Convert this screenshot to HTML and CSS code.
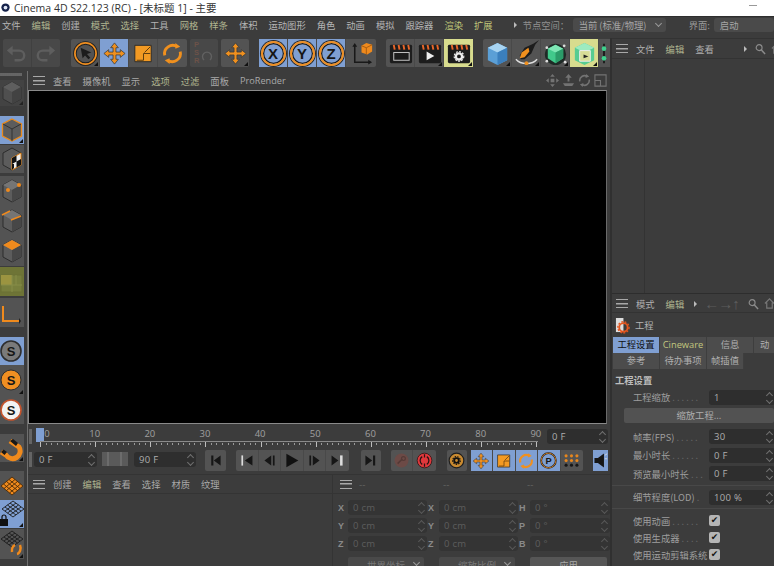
FILE: index.html
```html
<!DOCTYPE html>
<html lang="zh">
<head>
<meta charset="utf-8">
<title>Cinema 4D</title>
<link rel="stylesheet" href="styles.css">
</head>
<body>
<svg class="defs" width="0" height="0" aria-hidden="true">
  <symbol id="arrow" viewBox="0 0 28 28"><circle cx="14" cy="14" r="11" fill="none" stroke="#1f1f1f" stroke-width="3.6"/><circle cx="14" cy="14" r="11" fill="none" stroke="#ef8f22" stroke-width="1.8"/><path d="M9 8l11 5-4.500 1.500 3.500 4-2 1.500-3.500-4L11 19z" fill="#1c1c1c"/></symbol>
  <symbol id="move" viewBox="0 0 28 28"><path d="M14 3l4 5h-2.500v4.500H20V10l5 4-5 4v-2.500h-4.500V20H18l-4 5-4-5h2.500v-4.500H8V18l-5-4 5-4v2.500h4.500V8H10z" fill="#f0901e" stroke="#3a3a3a" stroke-width=".8"/></symbol>
  <symbol id="scale" viewBox="0 0 28 28"><path d="M5 5.500h17v17H5z" fill="#f39a23" stroke="#2b2b2b"/><path d="M7 21h7v-7h7" fill="none" stroke="#5a3a10" stroke-width="1"/><path d="M15 13l6-6" stroke="#5a3a10"/></symbol>
  <symbol id="rotate" viewBox="0 0 28 28"><path d="M6 16a8.500 8.500 0 0 1 13-9" fill="none" stroke="#f0901e" stroke-width="3"/><path d="M22 12a8.500 8.500 0 0 1-13 9" fill="none" stroke="#f0901e" stroke-width="3"/><path d="M17 3l5 4-5 2zM11 25l-5-4 5-2z" fill="#f0901e"/></symbol>
  <symbol id="undo" viewBox="0 0 28 28"><path d="M8 11h9a5 5 0 0 1 0 10h-5" fill="none" stroke="#5e5e5e" stroke-width="2.500"/><path d="M10 6v10l-6-5z" fill="#5e5e5e"/></symbol>
  <symbol id="redo" viewBox="0 0 28 28"><path d="M20 11h-9a5 5 0 0 0 0 10h5" fill="none" stroke="#5e5e5e" stroke-width="2.500"/><path d="M18 6v10l6-5z" fill="#5e5e5e"/></symbol>
  <symbol id="coord" viewBox="0 0 28 28"><path d="M7 6v17h15" fill="none" stroke="#191919" stroke-width="1.600"/><path d="M7 3l2.500 4h-5zM25 23l-4 2.500v-5z" fill="#191919"/><path d="M14 6l5-3 6 2v7l-5 3-6-2z" fill="#ef8a1d"/><path d="M19 8l6-3M19 8v7M19 8l-5-2" stroke="#a85c10" fill="none"/></symbol>
  <symbol id="film" viewBox="0 0 28 28"><rect x="3" y="5" width="23" height="19" rx="1.500" fill="#1d1d1d"/><path d="M7 5l1 5M12 5l1 5M17 5l1 5M22 5l1 5" stroke="#e8662a" stroke-width="2"/><rect x="7" y="13" width="16" height="8" fill="none" stroke="#c9c9c9" stroke-width="1"/></symbol>
  <symbol id="filmplay" viewBox="0 0 28 28"><rect x="3" y="5" width="23" height="19" rx="1.500" fill="#1d1d1d"/><path d="M7 5l1 5M12 5l1 5M17 5l1 5M22 5l1 5" stroke="#e8662a" stroke-width="2"/><path d="M11 12l8 4.500-8 4.500z" fill="#eee"/></symbol>
  <symbol id="filmgear" viewBox="0 0 28 28"><rect x="3" y="5" width="23" height="19" rx="1.500" fill="#1d1d1d"/><path d="M7 5l1 5M12 5l1 5M17 5l1 5M22 5l1 5" stroke="#e8662a" stroke-width="2"/><circle cx="14.500" cy="17" r="3.200" fill="none" stroke="#eee" stroke-width="2.400"/><circle cx="14.500" cy="17" r="5" fill="none" stroke="#eee" stroke-width="1.200" stroke-dasharray="2 1.300"/></symbol>
  <symbol id="bluecube" viewBox="0 0 28 28"><path d="M14 3l10 5v13l-10 5-10-5V8z" fill="#5b9fd6"/><path d="M4 8l10-5 10 5-10 5z" fill="#a8d4f2"/><path d="M14 13v13l10-5V8z" fill="#3b7fbd"/></symbol>
  <symbol id="pen" viewBox="0 0 28 28"><path d="M27 0l-6 4-9 4-5 8 1 4 4 0 7-6 4-9z" fill="#1d1d1d"/><path d="M16 8l-7 5-2 6 5-1 5-6z" fill="#f0901e"/><path d="M3 20c5 6 17 6 22 0" fill="none" stroke="#ddd" stroke-width="1.400"/><circle cx="14" cy="24" r="2" fill="#f0901e"/></symbol>
  <symbol id="nurbs" viewBox="0 0 28 28"><circle cx="14" cy="15" r="11" fill="#1f2a26"/><path d="M14 5l8 4v10l-8 5-8-5V9z" fill="#41c98b"/><path d="M6 9l8-4 8 4-8 4z" fill="#7ee6b4"/><path d="M14 13v11l8-5V9z" fill="#2b9c69"/><circle cx="5" cy="8" r="1.400" fill="#ddd"/><circle cx="23" cy="6" r="1.400" fill="#ddd"/><circle cx="5" cy="22" r="1.400" fill="#ddd"/><circle cx="24" cy="23" r="1.400" fill="#ddd"/></symbol>
  <symbol id="boole" viewBox="0 0 28 28"><path d="M14 3l10 5v13l-10 5-10-5V8z" fill="#57cc92"/><path d="M4 8l10-5 10 5-10 5z" fill="#9debc0"/><path d="M9 11h11v11H9z" fill="#d8dc96" stroke="#eee"/><path d="M13 15l5 2-5 2z" fill="#222"/></symbol>
  <symbol id="gears" viewBox="0 0 10 28"><path d="M5 4v20" stroke="#1d1d1d" stroke-width="2"/><circle cx="5" cy="9" r="2.400" fill="#3ed08d"/><circle cx="5" cy="19" r="2.400" fill="#3ed08d"/></symbol>
  <symbol id="cube" viewBox="0 0 24 28"><path d="M12 3l9 5v12l-9 5-9-5V8z" fill="#5c5c5c" stroke="#2c2c2c"/><path d="M3 8l9-5 9 5-9 5z" fill="#757575"/><path d="M12 13v12l9-5V8z" fill="#474747"/></symbol>
  <symbol id="cubeo" viewBox="0 0 24 28"><path d="M12 3l9.500 5v12L12 25l-9.500-5V8z" fill="#5c5c5c" stroke="#e98a1c" stroke-width="1.300"/><path d="M3 8l9 5 9-5M12 13v12" fill="none" stroke="#333"/></symbol>
  <symbol id="checker" viewBox="0 0 24 28"><path d="M12 3l9 5v12l-9 5-9-5V8z" fill="#5c5c5c" stroke="#2c2c2c"/><path d="M12 13l9-5v12l-9 5z" fill="#eee" stroke="#e98a1c"/><path d="M12 13l4.500-2.500v6L12 19zM16.500 16.500l4.500-2.500v6l-4.500 2.500zM12 19l2 0v4l-2 2z" fill="#111"/></symbol>
  <symbol id="cubev" viewBox="0 0 24 28"><use href="#cube"/><circle cx="8" cy="13" r="2" fill="#ef8a1d"/><circle cx="19" cy="8" r="2" fill="#ef8a1d"/></symbol>
  <symbol id="cubee" viewBox="0 0 24 28"><use href="#cube"/><path d="M2 8l8-4M11 13l10-4" stroke="#ef8a1d" stroke-width="1.500"/></symbol>
  <symbol id="cubep" viewBox="0 0 24 28"><use href="#cube"/><path d="M12 3l9 5-9 5-9-5z" fill="#ef8a1d"/></symbol>
  <symbol id="lsys" viewBox="0 0 24 28"><path d="M3 7v15h16" fill="none" stroke="#ef8a1d" stroke-width="2"/><path d="M19 19l2 3-2 3z" fill="#222"/></symbol>
  <symbol id="workp" viewBox="0 0 24 28"><rect x="1" y="7" width="21" height="17" fill="#787f3d" stroke="#6a7035"/><rect x="1" y="7" width="11" height="10" fill="#9b9440"/><path d="M12 7v17M1 17h21M16 7v10" stroke="#868d49"/></symbol>
  <symbol id="magnet" viewBox="0 0 24 28"><path d="M10 7l9 6a6.500 6.500 0 0 1-13 8l-5-3" fill="none" stroke="#ef8a1d" stroke-width="5"/><path d="M1 18l2.500-2.500 3.500 2.500-2.500 3zM10 7l3-2 5 4-2 3z" fill="#181818"/></symbol>
  <symbol id="grido" viewBox="0 0 24 28"><path d="M12 5l11 9-11 9L1 14z" fill="#ef8a1d"/><path d="M12 5l11 9-11 9L1 14zM6.500 9.500l11 9M9 7.500l11 9M3.500 12l11 9M17.500 9.500l-11 9M15 7.500l-11 9M20.500 12l-11 9" fill="none" stroke="#4a2a08" stroke-width=".9"/></symbol>
  <symbol id="gridlock" viewBox="0 0 24 28"><path d="M13 1l11 8-11 8L2 9zM7.500 5l11 8M10 3l11 8M5 7l11 8M18.500 5l-11 8M16 3L5 11M21 7l-11 8" fill="none" stroke="#1c1c1c" stroke-width=".9"/><rect x="0" y="19" width="8" height="7" fill="#111"/><path d="M2 19v-2a2 2 0 0 1 4 0v2" fill="none" stroke="#111" stroke-width="1.200"/></symbol>
  <symbol id="gridrot" viewBox="0 0 24 28"><path d="M12 1l11 8-11 8L1 9zM6.500 5l11 8M9 3l11 8M4 7l11 8M17.500 5l-11 8M15 3L4 11M20 7l-11 8" fill="none" stroke="#1c1c1c" stroke-width=".9"/><path d="M12 22a4 6 0 0 1 3-7M20 15a4 6 0 0 1-3 9" fill="none" stroke="#ef8a1d" stroke-width="2.500"/></symbol>
  <symbol id="first" viewBox="0 0 20 20"><path d="M5 4h2.500v12H5zM16 4v12L8 10z" fill="#161616"/></symbol>
  <symbol id="prevk" viewBox="0 0 20 20"><path d="M4 4h2v12H4z" fill="#ddd"/><path d="M17 4v12L8 10z" fill="#161616"/></symbol>
  <symbol id="prev" viewBox="0 0 20 20"><path d="M12 4v12L4 10zM14 4h2v12h-2z" fill="#161616"/></symbol>
  <symbol id="play" viewBox="0 0 20 20"><path d="M4 2l14 8-14 8z" fill="#111"/></symbol>
  <symbol id="next" viewBox="0 0 20 20"><path d="M4 4h2v12H4zM8 4l8 6-8 6z" fill="#161616"/></symbol>
  <symbol id="nextk" viewBox="0 0 20 20"><path d="M3 4l8 6-8 6z" fill="#161616"/><path d="M13 4h3v12h-3z" fill="#ddd"/></symbol>
  <symbol id="last" viewBox="0 0 20 20"><path d="M4 4l8 6-8 6zM13 4h2.500v12H13z" fill="#161616"/></symbol>
  <symbol id="key" viewBox="0 0 22 22"><circle cx="11" cy="11" r="9" fill="#6c4a46"/><path d="M6 15l6-6" stroke="#543a36" stroke-width="2"/><circle cx="13.500" cy="8.500" r="2.500" fill="none" stroke="#543a36" stroke-width="1.500"/></symbol>
  <symbol id="rec" viewBox="0 0 22 22"><circle cx="11" cy="11" r="9.500" fill="#e0383c" stroke="#2a1414"/><path d="M8 6a6 6 0 0 0 0 10M14 6a6 6 0 0 1 0 10M11 3v4M11 15v4" fill="none" stroke="#2a1414" stroke-width="1.600"/></symbol>
  <symbol id="gear" viewBox="0 0 22 22"><circle cx="11" cy="11" r="9.500" fill="#c98a30" stroke="#1e1e1e" stroke-width="1.500"/><circle cx="11" cy="11" r="3" fill="none" stroke="#111" stroke-width="2.400"/><circle cx="11" cy="11" r="5" fill="none" stroke="#111" stroke-width="1.400" stroke-dasharray="2 1.400"/></symbol>
  <symbol id="dots" viewBox="0 0 22 18"><g fill="#e8871d"><circle cx="4" cy="3" r="2"/><circle cx="11" cy="3" r="2"/><circle cx="18" cy="3" r="2"/><circle cx="4" cy="9" r="2"/><circle cx="11" cy="9" r="2"/><circle cx="18" cy="9" r="2"/></g><g fill="#171717"><circle cx="4" cy="15" r="2"/><circle cx="11" cy="15" r="2"/><circle cx="18" cy="15" r="2"/></g></symbol>
  <symbol id="speaker" viewBox="0 0 16 22"><path d="M1 8h4l7-5v16l-7-5H1z" fill="#161616"/><path d="M13 5l3-2M13 9h3" stroke="#ddd"/></symbol>
  <symbol id="search" viewBox="0 0 12 12"><circle cx="4.500" cy="4.500" r="3.200" fill="none" stroke="#8b8b8b" stroke-width="1.300"/><path d="M7 7l4 4.500" stroke="#8b8b8b" stroke-width="1.600"/></symbol>
  <symbol id="doc" viewBox="0 0 16 18"><path d="M1 1h8v15H1z" fill="#ddd"/><circle cx="9" cy="11" r="4.500" fill="none" stroke="#e5561f" stroke-width="2"/><circle cx="9" cy="11" r="6" fill="none" stroke="#e5561f" stroke-width="1.400" stroke-dasharray="2 1.600"/></symbol>
  <symbol id="navmove" viewBox="0 0 14 14"><path d="M7 0l2.500 3h-5zM7 14l-2.500-3h5zM0 7l3-2.500v5zM14 7l-3 2.500v-5zM5 5h4v4H5z" fill="#737373"/></symbol>
  <symbol id="navzoom" viewBox="0 0 14 14"><path d="M7 0l3.500 4h-2.500v4H6V4H3.500zM1 10h12l-2 3H3z" fill="#737373"/></symbol>
  <symbol id="navrot" viewBox="0 0 14 14"><path d="M2 8a5 5 0 0 1 8-5M12 6a5 5 0 0 1-8 5" fill="none" stroke="#737373" stroke-width="1.700"/><path d="M9 0l3 3-4 1zM5 14l-3-3 4-1z" fill="#737373"/></symbol>
  <symbol id="navmax" viewBox="0 0 14 14"><path d="M1 1h12v12H1zM1 7h6v6" fill="none" stroke="#737373" stroke-width="1.200"/></symbol>
  <symbol id="house" viewBox="0 0 12 12"><path d="M1 6l5-5 5 5M3 5v6h6V5" fill="none" stroke="#777" stroke-width="1.300"/></symbol>
</svg>

<div class="app">
  <header class="title">
    <svg class="title-logo" viewBox="0 0 12 12"><circle cx="6" cy="6" r="5.500" fill="#15224a"/><circle cx="6" cy="6" r="2.500" fill="#dfe6f5"/></svg>
    <span class="title-text">Cinema 4D S22.123 (RC) - [未标题 1] - 主要</span>
    <span class="minimize"></span>
  </header>

  <nav class="menu">
    <span>文件</span><span class="g">编辑</span><span>创建</span><span class="g">模式</span><span class="g">选择</span><span>工具</span><span class="g">网格</span><span class="g">样条</span><span>体积</span><span>运动图形</span><span>角色</span><span>动画</span><span>模拟</span><span>跟踪器</span><span class="y">渲染</span><span class="y">扩展</span>
    <i class="tri menu-tri"></i><span class="node-label">节点空间：</span>
    <span class="select node-sel">当前 (标准/物理)<i class="chev"></i></span>
    <span class="ui-label">界面:</span>
    <span class="select ui-sel">启动</span>
  </nav>

  <div class="work">
    <div class="left">
      <div class="toolbar">
        <div class="grp dis"><span class="b"><svg><use href="#undo"/></svg></span><span class="b"><svg><use href="#redo"/></svg></span></div>
        <div class="grp m11"><span class="b c"><svg><use href="#arrow"/></svg></span><span class="b on"><svg><use href="#move"/></svg></span><span class="b"><svg><use href="#scale"/></svg></span><span class="b"><svg><use href="#rotate"/></svg></span></div>
        <div class="grp m3 psr"><span class="psr-t">P<br>S<br>R</span><svg viewBox="0 0 12 12"><path d="M3 9a4.500 4.500 0 1 1 6 0" fill="none" stroke="#616161" stroke-width="1.400"/></svg></div>
        <div class="grp m3"><span class="b c"><svg><use href="#move"/></svg></span></div>
        <div class="grp m10"><span class="b on axis"><b>X</b></span><span class="b on axis"><b>Y</b></span><span class="b on axis"><b>Z</b></span><span class="b wide30"><svg><use href="#coord"/></svg></span></div>
        <div class="grp m10"><span class="b"><svg><use href="#film"/></svg></span><span class="b c"><svg><use href="#filmplay"/></svg></span><span class="b yel c"><svg><use href="#filmgear"/></svg></span></div>
        <div class="grp m10 clip"><span class="b c"><svg><use href="#bluecube"/></svg></span><span class="b c"><svg><use href="#pen"/></svg></span><span class="b c"><svg><use href="#nurbs"/></svg></span><span class="b yel c"><svg><use href="#boole"/></svg></span><span class="b narrow"><svg viewBox="0 0 10 28"><use href="#gears"/></svg></span></div>
      </div>

      <div class="mid">
        <aside class="tools">
          <div class="grip"></div>
          <span class="t dim c"><svg><use href="#cube"/></svg></span>
          <span class="t on c h28 top10"><svg><use href="#cubeo"/></svg></span>
          <span class="t h28 top1"><svg><use href="#checker"/></svg></span>
          <span class="t h30 top3"><svg><use href="#cubev"/></svg></span>
          <span class="t h30"><svg><use href="#cubee"/></svg></span>
          <span class="t h30"><svg><use href="#cubep"/></svg></span>
          <span class="t olive"><svg><use href="#workp"/></svg></span>
          <span class="t top2 h29"><svg><use href="#lsys"/></svg></span>
          <span class="t on h28 top10"><svg viewBox="0 0 24 28"><circle cx="11" cy="14" r="10" fill="#7a7a7a" stroke="#2e2e2e" stroke-width="1.600"/><text x="11" y="18.500" text-anchor="middle" class="sicon">S</text></svg></span>
          <span class="t c h30"><svg viewBox="0 0 24 28"><circle cx="11" cy="14" r="10" fill="#ef8f22" stroke="#2e2e2e"/><text x="11" y="18.500" text-anchor="middle" class="sicon">S</text></svg></span>
          <span class="t h29"><svg viewBox="0 0 24 28"><circle cx="11" cy="14" r="10" fill="#f2f2f2" stroke="#c4532c" stroke-width="1.600"/><text x="11" y="18.500" text-anchor="middle" class="sicon">S</text></svg></span>
          <span class="t c h28 top10"><svg><use href="#magnet"/></svg></span>
          <span class="t h29 top9"><svg><use href="#grido"/></svg></span>
          <span class="t on c h28"><svg><use href="#gridlock"/></svg></span>
          <span class="t c h30 top1"><svg><use href="#gridrot"/></svg></span>
        </aside>

        <main class="center">
          <div class="viewhead">
            <span class="burger"></span>
            <span>查看</span><span>摄像机</span><span>显示</span><span class="g">选项</span><span class="g">过滤</span><span>面板</span><span class="latin">ProRender</span>
            <span class="nav">
              <svg><use href="#navmove"/></svg><svg><use href="#navzoom"/></svg><svg><use href="#navrot"/></svg><svg><use href="#navmax"/></svg>
            </span>
          </div>
          <div class="viewport"></div>

          <div class="timeline">
            <span class="vgrip"></span>
            <div class="ruler">
              <span class="playhead"></span>
              <div class="nums"><span>0</span><span>10</span><span>20</span><span>30</span><span>40</span><span>50</span><span>60</span><span>70</span><span>80</span><span>90</span></div>
              <div class="ticks"></div>
            </div>
            <span class="field frame">0 F<i class="spin"></i></span>
          </div>

          <div class="transport">
            <span class="vgrip"></span>
            <span class="field f1">0 F<i class="spin"></i></span>
            <span class="range"></span>
            <span class="field f2">90 F<i class="spin"></i></span>
            <div class="tg tm9"><span class="k"><svg><use href="#first"/></svg></span></div>
            <div class="tg tm10"><span class="k"><svg><use href="#prevk"/></svg></span><span class="k"><svg><use href="#prev"/></svg></span><span class="k"><svg><use href="#play"/></svg></span><span class="k"><svg><use href="#next"/></svg></span><span class="k"><svg><use href="#nextk"/></svg></span></div>
            <div class="tg tm12"><span class="k"><svg><use href="#last"/></svg></span></div>
            <div class="tg tm10"><span class="k"><svg><use href="#key"/></svg></span><span class="k"><svg><use href="#rec"/></svg></span></div>
            <div class="tg tm11"><span class="k"><svg><use href="#gear"/></svg></span></div>
            <div class="tg tm4"><span class="k on big"><svg><use href="#move"/></svg></span><span class="k on big"><svg><use href="#scale"/></svg></span><span class="k on big"><svg><use href="#rotate"/></svg></span><span class="k on"><svg viewBox="0 0 22 22"><circle cx="11" cy="11" r="9.500" fill="none" stroke="#1a1a1a" stroke-width="2.400"/><circle cx="11" cy="11" r="9.500" fill="none" stroke="#ef8f22"/><text x="11" y="15.500" text-anchor="middle" class="picon">P</text></svg></span><span class="k"><svg><use href="#dots"/></svg></span></div>
            <div class="tg tm10"><span class="k on spk"><svg viewBox="0 0 16 22"><use href="#speaker"/></svg></span></div>
          </div>

          <div class="bottom">
            <section class="mat">
              <div class="subhead"><span class="burger"></span><span>创建</span><span class="g">编辑</span><span>查看</span><span>选择</span><span>材质</span><span>纹理</span></div>
            </section>
            <section class="coord">
              <div class="subhead dash"><span class="burger"></span><span>--</span><span>--</span><span>--</span></div>
              <div class="cgrid">
                <b>X</b><span class="field off">0 cm<i class="spin"></i></span><b>X</b><span class="field off">0 cm<i class="spin"></i></span><b>H</b><span class="field off">0 °<i class="spin"></i></span>
                <b>Y</b><span class="field off">0 cm<i class="spin"></i></span><b>Y</b><span class="field off">0 cm<i class="spin"></i></span><b>P</b><span class="field off">0 °<i class="spin"></i></span>
                <b>Z</b><span class="field off">0 cm<i class="spin"></i></span><b>Z</b><span class="field off">0 cm<i class="spin"></i></span><b>B</b><span class="field off">0 °<i class="spin"></i></span>
                <b></b><span class="drop">世界坐标<i class="chev"></i></span><b></b><span class="drop">缩放比例<i class="chev"></i></span><b></b><span class="apply">应用</span>
              </div>
            </section>
          </div>
        </main>
      </div>
    </div>

    <aside class="right">
      <section class="objects">
        <div class="rhead"><span class="burger"></span><span>文件</span><span class="g">编辑</span><span>查看</span><i class="tri rh-tri"></i><svg class="rh-search"><use href="#search"/></svg><svg class="rh-house"><use href="#house"/></svg></div>
        <div class="objbody"><div class="objcol"></div></div>
      </section>
      <section class="attrs">
        <div class="rhead ah"><span class="burger"></span><span>模式</span><span class="g">编辑</span><i class="tri at-tri"></i><span class="arrows">←→↑</span><svg class="at-search"><use href="#search"/></svg><svg class="rh-house"><use href="#house"/></svg></div>
        <div class="crumb"><svg viewBox="0 0 16 18"><use href="#doc"/></svg><span>工程</span></div>
        <div class="tabs">
          <span class="tab act">工程设置</span><span class="tab y">Cineware</span><span class="tab">信息</span><span class="tab cut">动</span>
          <span class="tab low">参考</span><span class="tab low">待办事项</span><span class="tab low short">帧插值</span>
        </div>
        <h2>工程设置</h2>
        <div class="row"><label>工程缩放 <u>. . . . . .</u></label><span class="field rf">1<i class="spin"></i></span></div>
        <div class="scale-btn">缩放工程...</div>
        <div class="row r-first"><label>帧率(FPS) <u>. . . . .</u></label><span class="field rf">30<i class="spin"></i></span></div>
        <div class="row"><label>最小时长 <u>. . . . . .</u></label><span class="field rf">0 F<i class="spin"></i></span></div>
        <div class="row"><label>预览最小时长 <u>. . .</u></label><span class="field rf">0 F<i class="spin"></i></span></div>
        <div class="row lod"><label>细节程度(LOD) <u>.</u></label><span class="field rf">100 %<i class="spin"></i></span></div>
        <div class="checks">
          <div class="row ck"><label>使用动画 <u>. . . . . .</u></label><span class="box">✔</span></div>
          <div class="row ck"><label>使用生成器 <u>. . . .</u></label><span class="box">✔</span></div>
          <div class="row ck"><label>使用运动剪辑系统</label><span class="box">✔</span></div>
        </div>
      </section>
    </aside>
  </div>
</div>
</body>
</html>
```

FILE: styles.css
```css
* { box-sizing: border-box; }
html, body { margin: 0; padding: 0; }
body { background: #3c3c3c; font-family: "Noto Sans CJK SC", "Liberation Sans", sans-serif; font-size: 9.3px; color: #b4b4b4; }
.defs { display: block; height: 0; }
.app { width: 774px; height: 566px; display: flex; flex-direction: column; overflow: hidden; background: #3c3c3c; }
.g { color: #b0b590; }
.y { color: #bfc478; }
.latin { font-family: "Open Sans", sans-serif; font-size: 9.200px; }
.sicon { font: 700 13px "Liberation Sans", sans-serif; fill: #161616; }
.picon { font: 700 12px "Liberation Sans", sans-serif; fill: #161616; }
.title { height: 16px; flex: none; background: #fff; display: flex; align-items: center; padding: 0 5px 2px 1px; color: #333; font-family: "Open Sans", "Noto Sans CJK SC", sans-serif; font-size: 10.500px; }
.title-logo { width: 9px; height: 9px; margin-right: 4px; }
.title-text { flex: 1; white-space: nowrap; }
.minimize { width: 8px; height: 1.500px; background: #999; margin-right: 12px; margin-bottom: 3px; }
.menu { height: 17px; flex: none; display: flex; align-items: center; gap: 11px; padding: 0 0 0 2px; white-space: nowrap; border-top: 1px solid #2e2e2e; background: #3c3c3c; }
.tri { display: block; width: 0; height: 0; flex: none; border-left: 3px solid #bbb; border-top: 3px solid transparent; border-bottom: 3px solid transparent; }
.menu-tri { margin-left: 10px; margin-right: -5px; }
.node-label { color: #8f8f8f; margin-right: -7.500px; }
.select { height: 14px; background: #4a4a4a; border-radius: 3px; display: flex; align-items: center; color: #a6a6a6; padding-left: 6px; flex: none; }
.node-sel { width: 93px; position: relative; }
.ui-label { margin-left: 12px; margin-right: -7px; color: #9a9a9a; }
.ui-sel { flex: 1; }
.chev { position: absolute; right: 5px; top: 3px; width: 5px; height: 5px; border-right: 1.200px solid #999; border-bottom: 1.200px solid #999; transform: rotate(45deg); }

.work { flex: 1; display: flex; min-height: 0; }
.left { width: 610px; flex: none; display: flex; flex-direction: column; }
.toolbar { height: 38px; flex: none; display: flex; align-items: flex-start; padding: 6px 0 0 3px; overflow: hidden; }
.grp { display: flex; height: 28px; background: #535353; border-radius: 2px; flex: none; }
.m10 { margin-left: 10px; }
.m11 { margin-left: 11px; }
.m3 { margin-left: 3px; }
.b { width: 29px; height: 28px; display: flex; align-items: center; justify-content: center; position: relative; border-right: 1px solid #494949; flex: none; }
.b:last-child { border-right: 0; }
.b svg { width: 27px; height: 27px; }
.on { background: #7f9fd2; }
.yel { background: #d8dc8e; }
.c::after { content: ""; position: absolute; right: 1px; bottom: 1px; border-right: 4px solid #111; border-top: 4px solid transparent; }
.dis { background: #484848; }
.dis .b { width: 28.500px; border-right-color: #404040; }
.psr { width: 28px; background: #484848; position: relative; padding: 2px 0 0 4px; }
.psr svg { width: 12px; height: 12px; margin: 10px 0 0 2px; }
.psr-t { font: 700 7.500px/8px "Liberation Sans", sans-serif; color: #6c5248; }
.m3 + .m3 .b { width: 28px; }
.wide30 { width: 30px; }
.axis b { width: 25px; height: 25px; border-radius: 50%; border: 2.500px solid #ef8f22; box-shadow: 0 0 0 1px #2a2a2a, inset 0 0 0 1.200px #1b1b1b; display: flex; align-items: center; justify-content: center; font: 700 15px "Liberation Sans", sans-serif; color: #161616; }
.clip { flex: 1; border-radius: 2px 0 0 2px; }
.narrow { width: 10px; }
.narrow svg { width: 10px; }

.mid { flex: 1; display: flex; min-height: 0; }
.tools { width: 28px; flex: none; border-right: 1px solid #6f6f6f; padding-top: 2px; display: flex; flex-direction: column; overflow: hidden; }
.grip { width: 22px; height: 3px; flex: none; margin-bottom: 4px; background: radial-gradient(circle, #6a6a6a .6px, transparent .8px) 0 0 / 2px 1.500px; }
.vgrip { width: 3px; height: 15px; margin: 1px 4px 0 1px; flex: none; background: radial-gradient(circle, #6a6a6a .6px, transparent .8px) 0 0 / 1.500px 2px; }
.t { width: 24px; height: 28px; flex: none; background: #535353; display: flex; align-items: center; justify-content: center; position: relative; }
.t.on { background: #7f9fd2; }
.t svg { width: 24px; height: 28px; }
.t.dim { background: #484848; opacity: .6; height: 26px; }
.t.olive { background: #6e7436; height: 29px; margin-top: 1px; }
.h28 { height: 28px; }
.t.h29 { height: 29px; }
.t.h30 { height: 30px; }
.top1 { margin-top: 1px; }
.top2 { margin-top: 2px; }
.top3 { margin-top: 3px; }
.top9 { margin-top: 9px; }
.top10 { margin-top: 10px; }

.center { flex: 1; min-width: 0; display: flex; flex-direction: column; }
.burger { display: block; width: 12px; height: 9px; flex: none; border-top: 1.500px solid #a8a8a8; border-bottom: 1.500px solid #a8a8a8; background: linear-gradient(#a8a8a8, #a8a8a8) center / 100% 1.500px no-repeat; }
.viewhead { height: 19px; flex: none; display: flex; align-items: center; gap: 11px; padding: 0 3px 0 5px; color: #a9a9a9; }
.viewhead .burger { margin-right: -3px; }
.nav { margin-left: auto; display: flex; gap: 3px; align-items: center; }
.nav svg { width: 13px; height: 13px; }
.viewport { height: 334px; flex: none; margin-right: 3px; background: #000; border-top: 1px solid #8a8a8a; border-left: 1px solid #8a8a8a; border-right: 1px solid #6a6a6a; border-bottom: 1px solid #8a8a8a; }

.timeline { height: 24px; flex: none; display: flex; align-items: flex-start; padding: 4px 0 0 0; }
.ruler { width: 511px; height: 20px; position: relative; flex: none; }
.playhead { position: absolute; left: 0; top: 0; width: 8px; height: 14px; background: #7f9fd2; }
.nums { display: flex; margin-left: -24px; font: 9.500px/11px "Open Sans", sans-serif; color: #a0a0a0; }
.nums span { width: 55.150px; flex: none; text-align: center; }
.nums span:first-child { text-indent: 15px; }
.ticks { position: absolute; left: 4px; right: 9px; top: 13px; height: 6px; border-top: 1px solid #8a8a8a; background: repeating-linear-gradient(90deg, #bdbdbd 0 1px, transparent 1px 55.150px) 0 0 / 100% 5px no-repeat, repeating-linear-gradient(90deg, #999 0 1px, transparent 1px 5.515px) 0 1px / 100% 2px no-repeat; }
.field { display: flex; align-items: center; height: 15px; background: #2e2e2e; border-radius: 3px; padding-left: 5px; position: relative; color: #adadad; font: 9.500px "Open Sans", sans-serif; letter-spacing: .3px; flex: none; }
.spin { position: absolute; right: 3px; top: 2px; width: 5px; height: 11px; }
.spin::before, .spin::after { content: ""; position: absolute; left: 0; width: 4px; height: 4px; border-left: 1px solid #707070; border-top: 1px solid #707070; transform: rotate(45deg); }
.spin::before { top: 1px; }
.spin::after { top: 6px; transform: rotate(225deg); }
.frame { width: 61px; margin-top: 1px; }

.transport { height: 26px; flex: none; display: flex; align-items: flex-start; padding: 2px 0 0 0; }
.transport .vgrip { margin: 2px 2px 0 1px; }
.f1 { width: 63px; margin-top: 2px; }
.range { width: 26px; height: 14px; margin: 2px 6px 0 5px; background: #5a5a5a linear-gradient(90deg, transparent 5px, #6c6c6c 5px 7px, transparent 7px 18px, #6c6c6c 18px 20px, transparent 20px); flex: none; }
.f2 { width: 62px; margin-top: 2px; }
.tg { display: flex; background: #535353; border-radius: 2px; height: 21px; flex: none; }
.k { width: 22.500px; height: 21px; display: flex; align-items: center; justify-content: center; border-right: 1px solid #494949; }
.k:last-child { border-right: 0; }
.k svg { width: 17px; height: 17px; }
.k.big svg { width: 20px; height: 20px; }
.tm9 { margin-left: 9px; }
.tm9 .k { width: 21px; }
.tm10 { margin-left: 10px; }
.tm12 { margin-left: 12px; }
.tm12 .k { width: 20px; }
.tm11 { margin-left: 11px; }
.tm11 .k { width: 20px; }
.tm4 { margin-left: 4px; }
.k.spk { width: 15px; }
.spk svg { width: 15px; height: 19px; }

.bottom { flex: 1; min-height: 0; display: flex; border-top: 1px solid #343434; }
.subhead { height: 19px; display: flex; align-items: center; gap: 11px; padding-left: 5px; border-bottom: 1px solid #343434; color: #a9a9a9; }
.subhead .burger { margin-right: -3px; }
.mat { width: 305px; flex: none; border-right: 1px solid #343434; }
.coord { flex: 1; min-width: 0; }
.dash { padding-left: 7px; gap: 0; color: #666; }
.dash span:not(.burger) { width: 84px; padding-left: 10px; }
.dash .burger { margin-right: -3px; }
.cgrid { display: grid; grid-template-columns: 9px 79px 10px 79px 10px 80px; column-gap: 1px; row-gap: 3px; padding: 6px 0 0 5px; align-items: center; }
.cgrid b { font: 700 9px "Liberation Sans", sans-serif; color: #8a8a8a; }
.field.off { width: 100%; color: #5e5e5e; background: #343434; }
.field.off .spin { opacity: .6; }
.drop { position: relative; height: 15px; margin-top: 3px; background: #494949; border-radius: 2px; color: #777; text-align: center; line-height: 16px; font-size: 9.500px; margin-right: 3px; display: block; }
.apply { height: 15px; margin-top: 3px; background: #565656; border-radius: 2px; text-align: center; line-height: 16px; color: #a8a8a8; display: block; margin-right: 3px; }

.right { flex: 1; min-width: 0; display: flex; flex-direction: column; border-left: 2px solid #303030; margin-top: 5px; overflow: hidden; }
.objects { height: 256px; flex: none; display: flex; flex-direction: column; border-bottom: 1px solid #2d2d2d; }
.rhead { height: 21px; flex: none; display: flex; align-items: center; gap: 11px; padding-left: 4px; border-bottom: 1px solid #333; color: #b0b0b0; white-space: nowrap; border-top: 1px solid #333; overflow: hidden; }
.rhead .burger { margin-right: -3px; }
.rh-tri { margin-left: 19px; margin-right: -3px; }
.rh-search, .at-search { width: 11px; height: 12px; flex: none; }
.rh-house { width: 11px; height: 11px; flex: none; margin-left: -6px; }
.objbody { flex: 1; }
.objcol { width: 33px; height: 100%; border-right: 1px solid #333; }
.attrs { flex: 1; min-height: 0; }
.ah { height: 18px; border-top: 0; margin-top: 1px; }
.at-tri { margin-left: -1px; margin-right: -4px; }
.arrows { color: #5c5c5c; font: 15px "Liberation Sans", sans-serif; letter-spacing: -1px; }
.at-search { margin-left: -2px; }
.crumb { height: 24px; display: flex; align-items: flex-start; gap: 5px; padding: 4px 0 0 3px; }
.crumb svg { width: 15px; height: 17px; }
.crumb span { line-height: 16px; }
.tabs { display: grid; grid-template-columns: 47px 47px 47px 21px; padding-left: 1px; }
.tab { height: 16px; background: #4c4c4c; border-right: 1px solid #3e3e3e; text-align: center; line-height: 15px; color: #b0b0b0; overflow: hidden; white-space: nowrap; }
.tab.y { color: #c2c77f; font-family: "Open Sans", sans-serif; }
.tab.act { background: #7f9fd2; color: #101010; }
.tab.cut { text-align: left; padding-left: 6px; }
.tab.short { width: 37px; }
h2 { margin: 0; font-size: 9.300px; font-weight: 700; color: #bdbdbd; padding: 3px 0 0 3px; height: 19px; line-height: 16px; }
.row { display: flex; align-items: center; padding-left: 21px; height: 18.500px; }
.row label { width: 76px; flex: none; color: #9e9e9e; white-space: nowrap; overflow: hidden; }
.row u { text-decoration: none; color: #6c6c6c; }
.rf { width: 66px; }
.scale-btn { height: 15px; margin: 1px 0 0 12px; background: #525252; border-radius: 2px; text-align: center; line-height: 14px; color: #adadad; }
.r-first { margin-top: 5px; }
.lod { height: 24px; margin-top: 2px; border-top: 1px solid #484848; border-bottom: 1px solid #484848; }
.checks { padding-top: 3px; }
.ck { height: 17px; }
.box { width: 11px; height: 11px; background: #b5b5b5; border-radius: 2px; color: #151515; font: 9px/11px "DejaVu Sans", sans-serif; text-align: center; flex: none; }
```
